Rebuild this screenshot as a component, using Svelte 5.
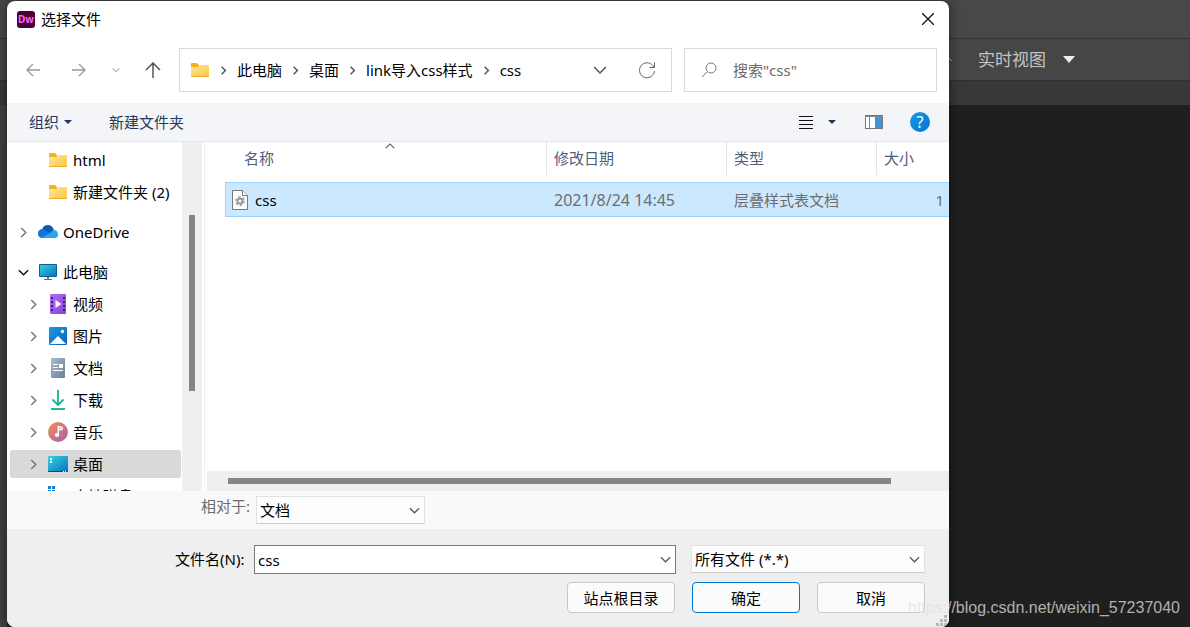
<script>
    const path = ['此电脑', '桌面', 'link导入css样式', 'css'];

    const tree = [
        { name: 'html', icon: 'folder', level: 1 },
        { name: '新建文件夹 (2)', icon: 'folder', level: 1 },
        { name: 'OneDrive', icon: 'cloud', level: 0, arrow: 'right', group: true },
        { name: '此电脑', icon: 'pc', level: 0, arrow: 'down', group: true },
        { name: '视频', icon: 'video', level: 1, arrow: 'right' },
        { name: '图片', icon: 'picture', level: 1, arrow: 'right' },
        { name: '文档', icon: 'document', level: 1, arrow: 'right' },
        { name: '下载', icon: 'download', level: 1, arrow: 'right' },
        { name: '音乐', icon: 'music', level: 1, arrow: 'right' },
        { name: '桌面', icon: 'desktop', level: 1, arrow: 'right' },
        { name: '本地磁盘', icon: 'disk', level: 1 }
    ];

    const files = [
        { name: 'css', date: '2021/8/24 14:45', type: '层叠样式表文档', size: '1' }
    ];

    let current = $state('桌面');
    let picked = $state('css');
    let fileName = $state('css');
    let query = $state('');

    function pick(file) {
        picked = file.name;
        fileName = file.name;
    }
</script>

{#snippet chevron(dir, size)}
    <svg class="chevron {dir}" width={size} height={size} viewBox="0 0 12 12" aria-hidden="true">
        <path d="M1 3.5 6 8.5 11 3.5" />
    </svg>
{/snippet}

{#snippet icon(name)}
    <svg width="20" height="20" viewBox="0 0 20 20" aria-hidden="true">
        {#if name === 'folder'}
            <path d="M1 4q0-1 1-1h5l2 2v4H1z" fill="#f5b11d" />
            <path d="M1 7h7l2-2h8q1 0 1 1v10q0 1-1 1H2q-1 0-1-1z" fill="url(#gFolder)" />
            <path d="M1 16h18q0 1-1 1H2q-1 0-1-1z" fill="#e9a92a" />
        {:else if name === 'cloud'}
            <path d="M4 8Q5 3 10 3 14 3 16 8L12 13 4 12z" fill="#0a5bb8" />
            <path d="M0 11.500Q0 7 5 7L13 12 6 16H4Q0 15.500 0 11.500z" fill="#0f78d4" />
            <path d="M4 15.500 12 11Q14 8 17 8 20 9 20 12.500 20 16 17 16H6Q5 16 4 15.500z" fill="#28a8ea" />
        {:else if name === 'pc'}
            <rect x="1" y="2" width="18" height="13" rx="1" fill="#0d5f91" />
            <rect x="2" y="3" width="16" height="11" fill="url(#gScreen)" />
            <path d="M9 15h2v2h3v1H6v-1h3z" fill="#60717d" />
        {:else if name === 'video'}
            <rect x="2" y="0" width="16" height="20" rx="1" fill="url(#gVideo)" />
            <path d="M4 3v16M16 3v16" stroke="#43216f" stroke-width="2" stroke-dasharray="2 2" />
            <path d="M7.500 6v8L13.500 10z" fill="#fff" />
        {:else if name === 'picture'}
            <rect x="1" y="1" width="18" height="18" rx="1" fill="url(#gBlue)" />
            <path d="M2 18 10 10 18 18z" fill="#f4fbff" />
            <circle cx="14.500" cy="5.500" r="1.700" fill="#fff" />
        {:else if name === 'document'}
            <rect x="3" y="0" width="14" height="20" rx="1" fill="url(#gDoc)" />
            <path d="M5 6.500h5M5 9.500h5M5 12.500h10" stroke="#fff" />
            <path d="M11 6h4v4h-4z" fill="#fff" />
        {:else if name === 'download'}
            <path d="M10 0v15M4.500 9.500 10 15 15.500 9.500" fill="none" stroke="#18b394" stroke-width="1.800" />
            <path d="M3 19h14" stroke="#25b98b" stroke-width="2" />
        {:else if name === 'music'}
            <circle cx="10" cy="10" r="10" fill="url(#gMusic)" />
            <ellipse cx="9" cy="13" rx="2.200" ry="2" fill="#fff" />
            <path d="M10.300 13V4.500L14 5.500V7.500H10.300" fill="none" stroke="#fff" stroke-width="1.500" />
        {:else if name === 'desktop'}
            <rect x="0" y="2" width="20" height="16" rx="1" fill="url(#gScreen)" />
            <path d="M0 17h20q0 1-1 1H1q-1 0-1-1z" fill="#0a4776" />
            <path d="M2 4h2v2H2zM2 7h2v2H2z" fill="#fff" />
            <path d="M15 17.500h1M17 17.500h1" stroke="#fff" />
        {:else if name === 'disk'}
            <path d="M0 0h3v3H0zM4 0h3v3H4zM0 4h3v3H0zM4 4h3v3H4z" fill="#1683d8" />
            <rect x="0" y="10" width="20" height="6" fill="#8a959d" />
        {/if}
    </svg>
{/snippet}

<svg class="defs" width="0" height="0" aria-hidden="true">
    <defs>
        <linearGradient id="gFolder" x2="1" y2="1"><stop stop-color="#ffe59b" /><stop offset="1" stop-color="#fdc840" /></linearGradient>
        <linearGradient id="gScreen" x2="1" y2="1"><stop stop-color="#35d3dd" /><stop offset="1" stop-color="#0871c4" /></linearGradient>
        <linearGradient id="gVideo" x2="1" y2="1"><stop stop-color="#b46df0" /><stop offset="1" stop-color="#8840dc" /></linearGradient>
        <linearGradient id="gBlue" x2="1" y2="1"><stop stop-color="#189ae5" /><stop offset="1" stop-color="#0863b8" /></linearGradient>
        <linearGradient id="gDoc" x2="1" y2="1"><stop stop-color="#a9bdcd" /><stop offset="1" stop-color="#66819b" /></linearGradient>
        <linearGradient id="gMusic" x2="1" y2="1"><stop stop-color="#f28f4e" /><stop offset="1" stop-color="#a461b4" /></linearGradient>
    </defs>
</svg>

<div class="screen">
    <div class="editor">
        <div class="menu-bar"></div>
        <div class="view-bar">
            <svg width="10" height="16" viewBox="0 0 10 16" aria-hidden="true"><path d="M2 14V3L8 9" fill="none" stroke="#b0b0b0" /></svg>
            <button class="view">
                实时视图
                <svg width="12" height="7" viewBox="0 0 12 7" aria-hidden="true"><path d="M0 0h12L6 7z" fill="#eee" /></svg>
            </button>
        </div>
        <div class="tab-bar"></div>
        <div class="workspace"></div>
    </div>

    <div class="dialog" role="dialog" aria-labelledby="dialog-title">
        <header class="title-bar">
            <svg width="18" height="17" viewBox="0 0 18 17" aria-hidden="true">
                <rect width="18" height="17" rx="3" fill="#470137" />
                <text x="9" y="12" text-anchor="middle" font-size="10" font-weight="700" fill="#ff61f6">Dw</text>
            </svg>
            <h1 id="dialog-title">选择文件</h1>
            <button class="close" aria-label="关闭">
                <svg width="12" height="12" viewBox="0 0 12 12"><path d="M0 0 12 12M12 0 0 12" stroke="#111" stroke-width="1.300" /></svg>
            </button>
        </header>

        <nav class="nav-bar">
            <div class="history">
                <button aria-label="后退"><svg width="14" height="14" viewBox="0 0 14 14"><path d="M14 7H1M7 1 1 7 7 13" stroke="#999" stroke-width="1.300" /></svg></button>
                <button aria-label="前进"><svg width="14" height="14" viewBox="0 0 14 14"><path d="M0 7H13M7 1 13 7 7 13" stroke="#999" stroke-width="1.300" /></svg></button>
                <button class="recent" aria-label="最近">{@render chevron('down', 8)}</button>
                <button aria-label="上移"><svg width="16" height="16" viewBox="0 0 16 16"><path d="M8 16V1M1 8 8 1 15 8" stroke="#555" stroke-width="1.500" /></svg></button>
            </div>
            <div class="address">
                {@render icon('folder')}
                {#each path as part}
                    {@render chevron('right', 9)}
                    <a href="#{part}">{part}</a>
                {/each}
                <button class="expand" aria-label="展开">{@render chevron('down', 14)}</button>
                <button aria-label="刷新">
                    <svg width="18" height="18" viewBox="0 0 18 18"><path d="M16 6.500A7.500 7.500 0 1 0 16.500 10M16.500 1.500V6.500H11.500" stroke="#666" /></svg>
                </button>
            </div>
            <label class="search">
                <svg width="16" height="16" viewBox="0 0 16 16" aria-hidden="true"><circle cx="10" cy="6" r="5" /><path d="M6.500 9.500 1 15" /></svg>
                <input type="text" placeholder={'搜索"css"'} aria-label="搜索" bind:value={query} />
            </label>
        </nav>

        <div class="tool-bar">
            <button>组织 <svg width="8" height="4" viewBox="0 0 8 4" aria-hidden="true"><path d="M0 0h8L4 4z" fill="#1e395b" /></svg></button>
            <button>新建文件夹</button>
            <div class="view-tools">
                <button aria-label="视图"><svg width="14" height="14" viewBox="0 0 14 14"><path d="M0 1.500h14M0 5.500h14M0 9.500h14M0 13.500h14" stroke="#111" /></svg></button>
                <button class="more" aria-label="更多选项"><svg width="8" height="4" viewBox="0 0 8 4"><path d="M0 0h8L4 4z" fill="#1e395b" /></svg></button>
                <button class="preview" aria-label="预览窗格">
                    <svg width="18" height="14" viewBox="0 0 18 14">
                        <rect x="0.500" y="0.500" width="17" height="13" fill="#fff" stroke="#777" />
                        <path d="M0 1.500h18M4.500 2v11" stroke="#888" />
                        <rect x="10" y="2" width="7" height="11" fill="#3c96df" />
                    </svg>
                </button>
                <button class="help" aria-label="帮助">?</button>
            </div>
        </div>

        <div class="browser">
            <aside class="tree">
                <ul>
                    {#each tree as item}
                        <li class:group={item.group}>
                            <button class="node" class:child={item.level === 1} class:active={item.name === current} onclick={() => (current = item.name)}>
                                <span class="arrow {item.arrow}">
                                    {#if item.arrow}{@render chevron(item.arrow, 11)}{/if}
                                </span>
                                {@render icon(item.icon)}
                                {item.name}
                            </button>
                        </li>
                    {/each}
                </ul>
            </aside>
            <div class="v-scroll"><div class="thumb"></div></div>

            <div class="list">
                <div class="table-wrap">
                    <table>
                        <colgroup>
                            <col class="c-name" /><col class="c-date" /><col class="c-type" /><col />
                        </colgroup>
                        <thead>
                            <tr>
                                <th><div>名称<span class="sort">{@render chevron('up', 10)}</span></div></th>
                                <th><div>修改日期</div></th>
                                <th><div>类型</div></th>
                                <th><div>大小</div></th>
                            </tr>
                        </thead>
                        <tbody>
                            {#each files as file}
                                <tr class:selected={file.name === picked} onclick={() => pick(file)}>
                                    <td class="name">
                                        <div>
                                            <svg width="16" height="20" viewBox="0 0 16 20" aria-hidden="true">
                                                <path d="M0.500 0.500h10l5 5v14H0.500z" fill="#fbfbfb" stroke="#777" />
                                                <path d="M10.500 0.500v5h5" fill="#fff" stroke="#777" />
                                                <circle cx="8" cy="11" r="2.500" fill="none" stroke="#8d9aa5" stroke-width="2" />
                                                <circle cx="8" cy="11" r="4.200" fill="none" stroke="#8d9aa5" stroke-width="1.400" stroke-dasharray="2.200 2.200" />
                                            </svg>
                                            {file.name}
                                        </div>
                                    </td>
                                    <td class="date">{file.date}</td>
                                    <td>{file.type}</td>
                                    <td class="size">{file.size}</td>
                                </tr>
                            {/each}
                        </tbody>
                    </table>
                </div>
                <div class="h-scroll"><div class="thumb"></div></div>
            </div>
        </div>

        <div class="relative-bar">
            <label for="relative">相对于:</label>
            <div class="drop relative">
                <select id="relative"><option>文档</option><option>站点根目录</option></select>
                {@render chevron('down', 11)}
            </div>
        </div>

        <footer>
            <div class="fields">
                <label for="file-name">文件名(N):</label>
                <div class="drop combo">
                    <input id="file-name" type="text" bind:value={fileName} />
                    {@render chevron('down', 11)}
                </div>
                <div class="drop filter">
                    <select aria-label="文件类型"><option>所有文件 (*.*)</option></select>
                    {@render chevron('down', 11)}
                </div>
            </div>
            <div class="actions">
                <button class="root">站点根目录</button>
                <button class="ok">确定</button>
                <button>取消</button>
            </div>
        </footer>
        <svg class="grip" width="12" height="12" viewBox="0 0 12 12" aria-hidden="true">
            <path d="M9 0h3v3H9zM5 4h3v3H5zM9 4h3v3H9zM1 8h3v3H1zM5 8h3v3H5zM9 8h3v3H9z" fill="#b8b8b8" />
        </svg>
    </div>

    <div class="watermark">https://blog.csdn.net/weixin_57237040</div>
</div>

<style>
    :global(body) {
        margin: 0;
        background: #1f1f1f;
    }

    .defs {
        position: absolute;
    }

    .screen {
        position: relative;
        min-height: 100vh;
        display: flex;
        overflow: hidden;
        font-family: "Noto Sans", "Noto Sans CJK SC", sans-serif;
        font-size: 15px;
        line-height: 20px;
        color: #000;
    }

    button {
        display: flex;
        align-items: center;
        padding: 0;
        border: none;
        background: none;
        font: inherit;
        color: inherit;
        white-space: nowrap;
    }

    input,
    select {
        box-sizing: border-box;
        width: 100%;
        min-width: 0;
        border: none;
        outline: none;
        background: transparent;
        font: inherit;
        color: inherit;
    }

    svg {
        flex: none;
        fill: none;
    }

    .chevron path {
        stroke: currentColor;
        stroke-width: 1.3;
    }

    .chevron.right {
        transform: rotate(-90deg);
    }

    .chevron.up {
        transform: rotate(180deg);
    }

    /* editor behind the dialog */
    .editor {
        flex: 1;
        display: flex;
        flex-direction: column;
    }

    .menu-bar {
        height: 38px;
        background: #484848;
        border-bottom: 1px solid #333;
    }

    .view-bar {
        display: flex;
        align-items: center;
        justify-content: flex-end;
        gap: 24px;
        height: 41px;
        padding-right: 115px;
        background: #464646;
        border-bottom: 1px solid #303030;
    }

    .view {
        gap: 17px;
        font-size: 17px;
        color: #c4c4c4;
    }

    .tab-bar {
        height: 24px;
        background: #383838;
    }

    .workspace {
        flex: 1;
        border-left: 7px solid #404040;
        background: #1f1f1f;
    }

    .dialog {
        position: absolute;
        inset: 1px 241px 0 7px;
        display: flex;
        flex-direction: column;
        border-radius: 8px;
        overflow: hidden;
        background: #fff;
        box-shadow: 0 0 12px rgba(0, 0, 0, 0.5);
    }

    .title-bar {
        display: flex;
        align-items: center;
        gap: 6px;
        height: 36px;
        padding: 0 15px 0 10px;
    }

    h1 {
        flex: 1;
        margin: 0;
        font-size: 15px;
        font-weight: 400;
    }

    .nav-bar {
        display: flex;
        align-items: center;
        height: 44px;
        padding: 11px 12px 11px 19px;
    }

    .history {
        display: flex;
        align-items: center;
        width: 153px;
        gap: 32px;
    }

    .history .recent {
        margin: 0 -7px 0 -6px;
        color: #777;
    }

    .address,
    .search {
        display: flex;
        align-items: center;
        box-sizing: border-box;
        height: 44px;
        border: 1px solid #d9d9d9;
    }

    .address {
        flex: 1;
        gap: 9px;
        padding: 0 15px 0 10px;
        color: #555;
    }

    .address .chevron.right path {
        stroke-width: 2;
    }

    .address a {
        color: #000;
        text-decoration: none;
        white-space: nowrap;
    }

    .address .expand {
        margin: 0 22px 0 auto;
    }

    .search {
        width: 253px;
        margin-left: 12px;
        padding: 0 16px;
        gap: 16px;
    }

    .search svg {
        stroke: #777;
    }

    .search input {
        padding: 0;
    }

    .search input::placeholder {
        color: #6b6b6b;
        opacity: 1;
    }

    .tool-bar {
        display: flex;
        align-items: center;
        gap: 37px;
        height: 38px;
        padding: 0 19px 0 22px;
        background: #f4f5f8;
        border-bottom: 1px solid #e5e7ea;
        color: #1e395b;
    }

    .tool-bar button {
        gap: 5px;
    }

    .view-tools {
        display: flex;
        align-items: center;
        margin-left: auto;
    }

    .more {
        margin: 0 29px 0 15px;
    }

    .view-tools .help {
        justify-content: center;
        width: 20px;
        height: 20px;
        margin-left: 27px;
        border-radius: 50%;
        background: linear-gradient(135deg, #1699e4, #0875cf);
        font-size: 16px;
        color: #fff;
    }

    .browser {
        flex: 1 1 0;
        display: flex;
        min-height: 0;
    }

    .tree {
        width: 175px;
        overflow: hidden;
    }

    .tree ul {
        list-style: none;
        margin: 0;
        padding: 4px 1px 0 3px;
    }

    .tree li {
        margin-bottom: 4px;
    }

    .tree .group {
        margin-top: 12px;
    }

    .node {
        width: 100%;
        height: 28px;
        gap: 5px;
        padding-left: 8px;
        border-radius: 2px;
    }

    .node.child {
        padding-left: 18px;
    }

    .node.active {
        background: #d9d9d9;
    }

    .arrow {
        display: flex;
        width: 15px;
        color: #777;
    }

    .arrow.down {
        color: #111;
    }

    .arrow .chevron path {
        stroke-width: 1.6;
    }

    .v-scroll {
        width: 20px;
        background: #efefef;
    }

    .v-scroll .thumb {
        width: 6px;
        height: 176px;
        margin: 73px 0 0 7px;
        background: #858585;
    }

    .list {
        flex: 1;
        display: flex;
        flex-direction: column;
        min-width: 0;
        margin-left: 2px;
        border-left: 1px solid #f0f0f0;
    }

    .table-wrap {
        flex: 1;
        padding-left: 20px;
        overflow: hidden;
    }

    table {
        width: 100%;
        table-layout: fixed;
        border-spacing: 0;
    }

    .c-name {
        width: 322px;
    }

    .c-date {
        width: 180px;
    }

    .c-type {
        width: 150px;
    }

    th {
        padding: 0 0 7px;
        font-weight: 400;
        text-align: left;
        color: #4c607a;
    }

    th div {
        position: relative;
        height: 33px;
        padding-left: 7px;
        border-right: 1px solid #e5e5e5;
        line-height: 33px;
    }

    th:first-child div {
        margin-left: 12px;
    }

    th:last-child div {
        border-right: none;
    }

    .sort {
        position: absolute;
        top: -1px;
        left: 48%;
        line-height: 0;
        color: #555;
    }

    td {
        height: 33px;
        padding: 0 7px;
        border: solid transparent;
        border-width: 1px 0;
        color: #6d6d6d;
        white-space: nowrap;
    }

    td.name {
        padding-left: 6px;
        border-left-width: 1px;
        color: #000;
    }

    .name div {
        display: flex;
        align-items: center;
        gap: 7px;
    }

    .selected td {
        background: #cce8ff;
        border-color: #99d1ff;
    }

    .date {
        font-size: 16px;
    }

    td.size {
        padding-right: 5px;
        text-align: right;
    }

    .h-scroll {
        margin-left: 2px;
        padding: 7px 58px 7px 21px;
        background: #efefef;
    }

    .h-scroll .thumb {
        height: 6px;
        background: #858585;
    }

    .relative-bar {
        display: flex;
        height: 33px;
        padding: 5px 0 0 194px;
        gap: 6px;
        background: #f9f9f9;
        color: #6d6d6d;
    }

    .drop {
        position: relative;
        display: flex;
        box-sizing: border-box;
        height: 28px;
        border: 1px solid #e2e2e2;
        border-bottom-color: #ccc;
        background: #fdfdfd;
        color: #000;
    }

    .drop select,
    .drop input {
        appearance: none;
        padding: 0 20px 0 3px;
    }

    .drop .chevron {
        position: absolute;
        right: 4px;
        top: 8px;
        color: #555;
        pointer-events: none;
    }

    .drop.relative {
        width: 169px;
    }

    footer {
        display: flex;
        flex-direction: column;
        gap: 8px;
        padding: 16px 24px 14px 168px;
        background: #efefef;
    }

    .fields {
        display: flex;
        align-items: flex-start;
    }

    .fields label {
        width: 79px;
        line-height: 28px;
        white-space: nowrap;
    }

    .drop.combo {
        flex: 1;
        height: 29px;
        border-color: #7a7a7a;
        background: #fff;
    }

    .drop.filter {
        width: 234px;
        margin-left: 15px;
    }

    .actions {
        display: flex;
        justify-content: flex-end;
        gap: 17px;
    }

    .actions button {
        justify-content: center;
        box-sizing: border-box;
        width: 108px;
        height: 31px;
        border: 1px solid #c8c8c8;
        border-radius: 4px;
        background: #fbfbfb;
    }

    .actions .ok {
        border-color: #0078d4;
    }

    .grip {
        position: absolute;
        right: 2px;
        bottom: 0;
    }

    .watermark {
        position: absolute;
        right: 10px;
        bottom: 9px;
        font-family: "Liberation Sans", sans-serif;
        font-size: 16px;
        color: rgba(225, 225, 225, 0.75);
    }
</style>
